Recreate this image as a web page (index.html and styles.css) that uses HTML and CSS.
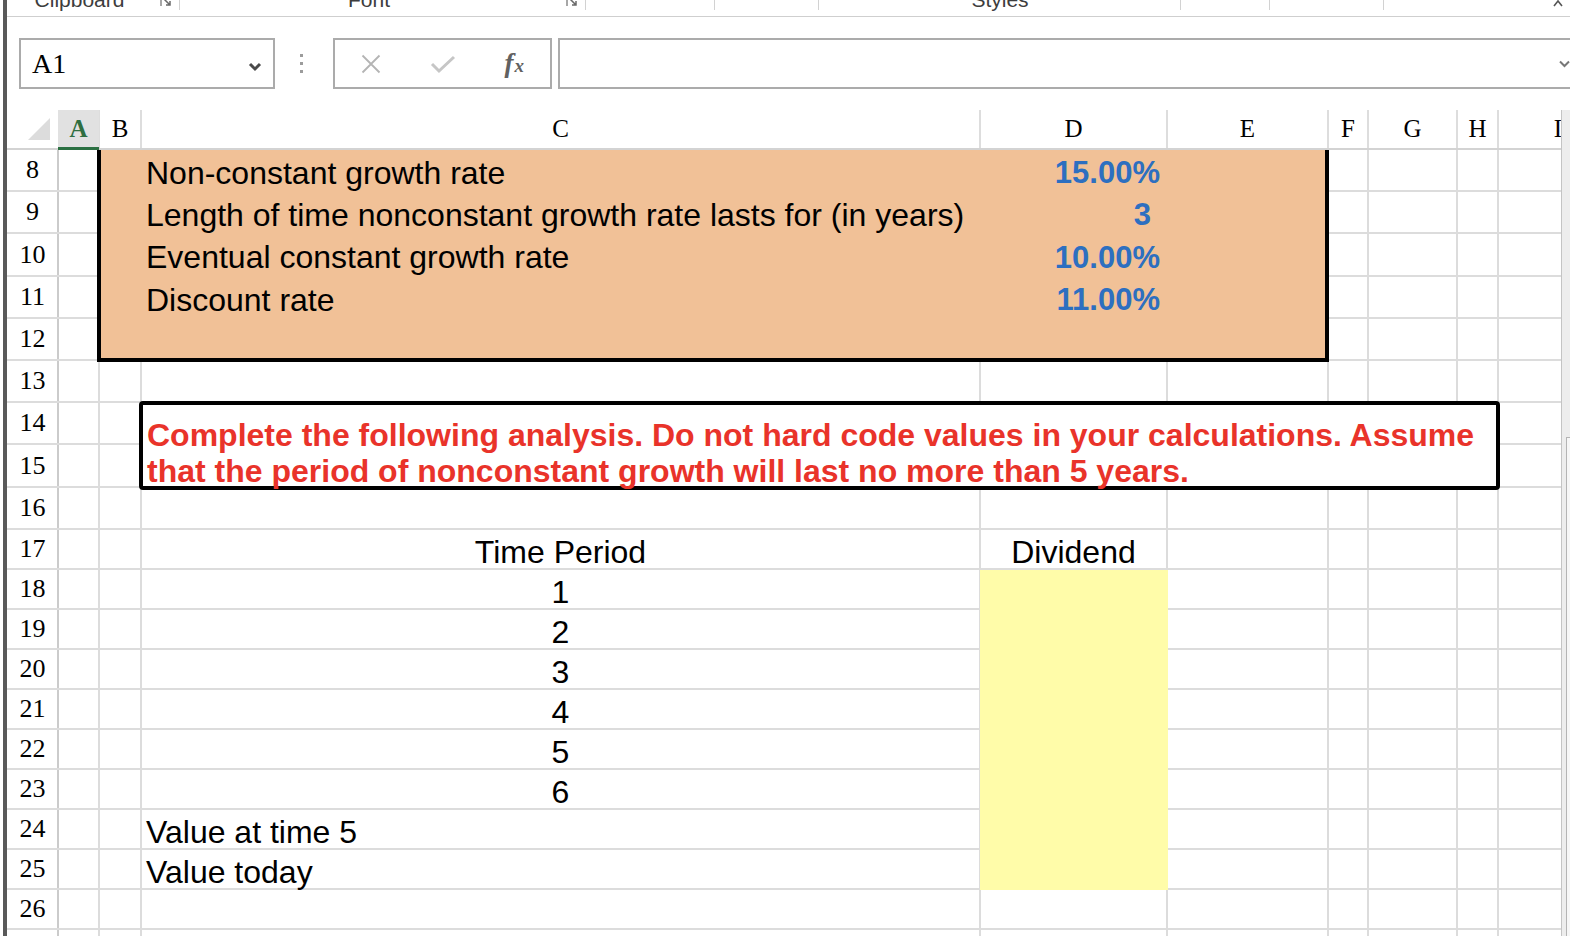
FILE: index.html
```html
<!DOCTYPE html>
<html lang="en">
<head>
<meta charset="utf-8">
<title>Spreadsheet</title>
<link rel="stylesheet" href="styles.css">
</head>
<body>
<div class="app">
  <div class="ribbon">
    <div class="grp g1"><span class="glabel">Clipboard</span><span class="launch"><svg width="12" height="12" viewBox="0 0 12 12"><path d="M1 11V1h10" fill="none" stroke="#8a8a8a" stroke-width="1.5"/><path d="M4 4l6 6M6 10h4V6" fill="none" stroke="#6a6a6a" stroke-width="1.5"/></svg></span></div>
    <div class="grp g2"><span class="glabel">Font</span><span class="launch"><svg width="12" height="12" viewBox="0 0 12 12"><path d="M1 11V1h10" fill="none" stroke="#8a8a8a" stroke-width="1.5"/><path d="M4 4l6 6M6 10h4V6" fill="none" stroke="#6a6a6a" stroke-width="1.5"/></svg></span></div>
    <div class="grp g3"></div>
    <div class="grp g4"></div>
    <div class="grp g5"><span class="glabel">Styles</span></div>
    <div class="grp g6"></div>
    <div class="grp g7"></div>
    <div class="grp g8"><span class="collapse"><svg width="10" height="10" viewBox="0 0 10 10"><path d="M1 8l4-5 4 5" fill="none" stroke="#555" stroke-width="1.6"/></svg></span></div>
  </div>

  <div class="fbar">
    <div class="namebox">
      <span class="ref">A1</span>
      <svg class="nb-chev" width="14" height="10" viewBox="0 0 14 10"><path d="M2 2l5 5 5-5" fill="none" stroke="#4a4a4a" stroke-width="3"/></svg>
    </div>
    <div class="dots"><i></i><i></i><i></i></div>
    <div class="fxbox">
      <span class="fxslot"><svg width="20" height="20" viewBox="0 0 20 20"><path d="M1.5 1.5l17 17M18.5 1.5l-17 17" fill="none" stroke="#b4b4b4" stroke-width="1.8"/></svg></span>
      <span class="fxslot"><svg width="26" height="20" viewBox="0 0 26 20"><path d="M2 10l7 7L24 3" fill="none" stroke="#c6c6c6" stroke-width="3"/></svg></span>
      <span class="fxslot fxtext"><span class="fx-f">f</span><span class="fx-x">x</span></span>
    </div>
    <div class="finput">
      <svg width="11" height="8" viewBox="0 0 11 8"><path d="M1 1.5l4.5 4.5L10 1.5" fill="none" stroke="#777" stroke-width="2"/></svg>
    </div>
  </div>

  <div class="sheetarea">
    <div class="sheetwrap">
      <div class="colhdr">
        <div class="corner"><svg width="22" height="22" viewBox="0 0 22 22"><path d="M22 0V22H0Z" fill="#dcdcdc"/></svg></div>
        <div class="ch sel">A</div>
        <div class="ch">B</div>
        <div class="ch">C</div>
        <div class="ch">D</div>
        <div class="ch">E</div>
        <div class="ch">F</div>
        <div class="ch">G</div>
        <div class="ch">H</div>
        <div class="ch">I</div>
      </div>

      <div class="body">
        <div class="lines">
          <div class="row h42"><span class="rn">8</span></div>
          <div class="row h42"><span class="rn">9</span></div>
          <div class="row h43"><span class="rn">10</span></div>
          <div class="row h42"><span class="rn">11</span></div>
          <div class="row h42"><span class="rn">12</span></div>
          <div class="row h42"><span class="rn">13</span></div>
          <div class="row h42"><span class="rn">14</span></div>
          <div class="row h43"><span class="rn">15</span></div>
          <div class="row h42"><span class="rn">16</span></div>
          <div class="row"><span class="rn">17</span></div>
          <div class="row"><span class="rn">18</span></div>
          <div class="row"><span class="rn">19</span></div>
          <div class="row"><span class="rn">20</span></div>
          <div class="row"><span class="rn">21</span></div>
          <div class="row"><span class="rn">22</span></div>
          <div class="row"><span class="rn">23</span></div>
          <div class="row"><span class="rn">24</span></div>
          <div class="row"><span class="rn">25</span></div>
          <div class="row"><span class="rn">26</span></div>
          <div class="row"><span class="rn">27</span></div>
        </div>

        <div class="content">
          <div class="orange"></div>
          <div class="cell cC r8 lbl">Non-constant growth rate</div>
          <div class="cell cC r9 lbl">Length of time nonconstant growth rate lasts for (in years)</div>
          <div class="cell cC r10 lbl">Eventual constant growth rate</div>
          <div class="cell cC r11 lbl">Discount rate</div>
          <div class="cell cD r8 val">15.00%</div>
          <div class="cell cD r9 val int">3</div>
          <div class="cell cD r10 val">10.00%</div>
          <div class="cell cD r11 val">11.00%</div>

          <div class="note"><p class="note-text">Complete the following analysis. Do not hard code values in your calculations. Assume<br>that the period of nonconstant growth will last no more than 5 years.</p></div>

          <div class="cell cC r17 ctr">Time Period</div>
          <div class="cell cD r17 ctr">Dividend</div>
          <div class="yellow"></div>
          <div class="cell cC r18 ctr">1</div>
          <div class="cell cC r19 ctr">2</div>
          <div class="cell cC r20 ctr">3</div>
          <div class="cell cC r21 ctr">4</div>
          <div class="cell cC r22 ctr">5</div>
          <div class="cell cC r23 ctr">6</div>
          <div class="cell cC r24 lbl">Value at time 5</div>
          <div class="cell cC r25 lbl">Value today</div>
        </div>
      </div>
    </div>
    <div class="vscroll"><div class="thumb"></div></div>
  </div>
</div>
</body>
</html>
```

FILE: styles.css
```css
* { box-sizing: border-box; }

html, body {
  margin: 0;
  padding: 0;
  width: 1570px;
  height: 936px;
  overflow: hidden;
  background: #fff;
}

body {
  font-family: "Liberation Sans", Arial, sans-serif;
  color: #000;
}

.app {
  margin-left: 3px;
  border-left: 4px solid #595959;
  height: 936px;
  overflow: hidden;
  display: flex;
  flex-direction: column;
}

/* ---------- ribbon (cut off at top) ---------- */
.ribbon {
  flex: none;
  height: 17px;
  border-bottom: 1px solid #cfcfcf;
  display: flex;
  overflow: hidden;
}

.grp {
  flex: none;
  height: 16px;
  display: flex;
  background: linear-gradient(#d2d2d2, #d2d2d2) right top / 1px 10px no-repeat;
}

.g1 { width: 173px; }
.g2 { width: 406px; }
.g3 { width: 129px; }
.g4 { width: 104px; }
.g5 { width: 362px; }
.g6 { width: 89px; }
.g7 { width: 114px; }
.g8 { flex: 1; background: none; justify-content: flex-end; }

.glabel {
  flex: 1;
  text-align: center;
  font-size: 21px;
  line-height: 21px;
  margin-top: -11px;
  color: #3d3d3d;
  white-space: nowrap;
}

.launch {
  width: 28px;
  display: flex;
  justify-content: center;
}

.launch svg { margin-top: -5px; }

.collapse { margin-right: 7px; }
.collapse svg { display: block; margin-top: -2px; }

/* ---------- formula bar ---------- */
.fbar {
  flex: none;
  height: 93px;
  padding: 21px 0 0 12px;
  display: flex;
  align-items: flex-start;
}

.namebox {
  flex: none;
  width: 256px;
  height: 51px;
  border: 2px solid #ababab;
  display: flex;
  align-items: center;
  padding: 0 11px 0 11px;
}

.ref {
  font-family: "Liberation Serif", "Times New Roman", serif;
  font-size: 28px;
}

.nb-chev { margin-left: auto; margin-top: 6px; }

.dots {
  flex: none;
  width: 3px;
  margin: 16px 30px 0 25px;
  display: flex;
  flex-direction: column;
  gap: 5px;
}

.dots i {
  display: block;
  width: 3px;
  height: 3px;
  background: #9c9c9c;
}

.fxbox {
  flex: none;
  width: 219px;
  height: 51px;
  border: 2px solid #ababab;
  display: flex;
}

.fxslot {
  flex: 1;
  display: flex;
  align-items: center;
  justify-content: center;
}

.fxtext {
  font-family: "Liberation Serif", "Times New Roman", serif;
  font-style: italic;
  font-weight: bold;
  color: #616161;
}

.fx-f { font-size: 27px; }
.fx-x { font-size: 19px; margin-left: 1px; margin-top: 4px; }

.finput {
  flex: 1;
  height: 51px;
  margin-left: 6px;
  margin-right: -12px;
  border: 2px solid #ababab;
  display: flex;
  align-items: center;
  justify-content: flex-end;
  padding-right: 10px;
}

/* ---------- sheet ---------- */
.sheetarea {
  flex: 1;
  display: flex;
  min-height: 0;
}

.sheetwrap {
  flex: 1;
  min-width: 0;
  overflow: hidden;
}

.colhdr,
.content {
  display: grid;
  grid-template-columns: 51px 41px 42px 839px 187px 161px 40px 89px 41px 120px;
  width: 1611px;
}

.colhdr {
  height: 40px;
  background-image:
    linear-gradient(#dddddd, #dddddd),
    linear-gradient(#dddddd, #dddddd),
    linear-gradient(#dddddd, #dddddd),
    linear-gradient(#dddddd, #dddddd),
    linear-gradient(#dddddd, #dddddd),
    linear-gradient(#dddddd, #dddddd),
    linear-gradient(#dddddd, #dddddd),
    linear-gradient(#dddddd, #dddddd);
  background-size: 2px 100%;
  background-repeat: no-repeat;
  background-position: 91px 0, 133px 0, 972px 0, 1159px 0, 1320px 0, 1360px 0, 1449px 0, 1490px 0;
}

.corner {
  border-bottom: 2px solid #d3d3d3;
  display: flex;
  align-items: flex-end;
  justify-content: flex-end;
  padding: 0 8px 8px 0;
}

.corner svg { display: block; }

.ch {
  border-bottom: 2px solid #d3d3d3;
  display: flex;
  align-items: center;
  justify-content: center;
  font-family: "Liberation Serif", "Times New Roman", serif;
  font-size: 25px;
  color: #000;
}

.ch.sel {
  background: #e1e1e1;
  color: #2f6e40;
  font-weight: bold;
  border-bottom: 3px solid #2b7042;
}

.body {
  display: grid;
  width: 1611px;
}

.lines,
.content {
  grid-area: 1 / 1;
}

.lines {
  display: flex;
  flex-direction: column;
  background-image:
    linear-gradient(#cbcbcb, #cbcbcb),
    linear-gradient(#dcdcdc, #dcdcdc),
    linear-gradient(#dcdcdc, #dcdcdc),
    linear-gradient(#dcdcdc, #dcdcdc),
    linear-gradient(#dcdcdc, #dcdcdc),
    linear-gradient(#dcdcdc, #dcdcdc),
    linear-gradient(#dcdcdc, #dcdcdc),
    linear-gradient(#dcdcdc, #dcdcdc),
    linear-gradient(#dcdcdc, #dcdcdc);
  background-size: 2px 100%;
  background-repeat: no-repeat;
  background-position: 50px 0, 91px 0, 133px 0, 972px 0, 1159px 0, 1320px 0, 1360px 0, 1449px 0, 1490px 0;
}

.row {
  flex: none;
  height: 40px;
  border-bottom: 2px solid #dcdcdc;
  display: flex;
  align-items: center;
}

.row.h42 { height: 42px; }
.row.h43 { height: 43px; }

.rn {
  width: 51px;
  text-align: center;
  font-family: "Liberation Serif", "Times New Roman", serif;
  font-size: 26px;
}

.content {
  grid-template-rows: 42px 42px 43px 42px 42px 42px 42px 43px 42px repeat(11, 40px);
}

.cC { grid-column: 4; }
.cD { grid-column: 5; }

.r8 { grid-row: 1; }
.r9 { grid-row: 2; }
.r10 { grid-row: 3; }
.r11 { grid-row: 4; }
.r17 { grid-row: 10; }
.r18 { grid-row: 11; }
.r19 { grid-row: 12; }
.r20 { grid-row: 13; }
.r21 { grid-row: 14; }
.r22 { grid-row: 15; }
.r23 { grid-row: 16; }
.r24 { grid-row: 17; }
.r25 { grid-row: 18; }

.cell {
  display: flex;
  align-items: center;
  font-size: 32px;
  white-space: nowrap;
  padding-top: 4px;
}

.lbl { padding-left: 5px; }
.ctr { justify-content: center; }

.val {
  justify-content: flex-end;
  padding-right: 7px;
  font-size: 31px;
  font-weight: bold;
  color: #2d6fc0;
}

.val.int { padding-right: 16px; }

.orange {
  grid-column: 3 / 7;
  grid-row: 1 / 6;
  background: #f1c197;
  border-left: 4px solid #000;
  border-right: 4px solid #000;
  border-bottom: 4px solid #000;
  margin: 0 -1px -1px -2px;
}

.note {
  grid-column: 4 / 10;
  grid-row: 7 / 9;
  margin: -2px;
  border: 4px solid #000;
  border-radius: 4px;
  background: #fff;
  display: flex;
  align-items: flex-end;
  padding-left: 4px;
}

.note-text {
  margin: 0 0 -3px 0;
  font-size: 32px;
  line-height: 36px;
  font-weight: bold;
  color: #e9332a;
  white-space: nowrap;
}

.yellow {
  grid-column: 5;
  grid-row: 11 / 19;
  background: #fffca9;
  margin: 0 -1px 0 0;
}

/* ---------- vertical scrollbar ---------- */
.vscroll {
  flex: none;
  width: 9px;
  background: #ededed;
  border-left: 1px solid #c4c4c4;
  display: flex;
  flex-direction: column;
}

.thumb {
  flex: 1;
  margin: 327px 0 0 4px;
  background: #f6f6f6;
  border-left: 1px solid #b4b4b4;
  border-top: 1px solid #b4b4b4;
}
```
